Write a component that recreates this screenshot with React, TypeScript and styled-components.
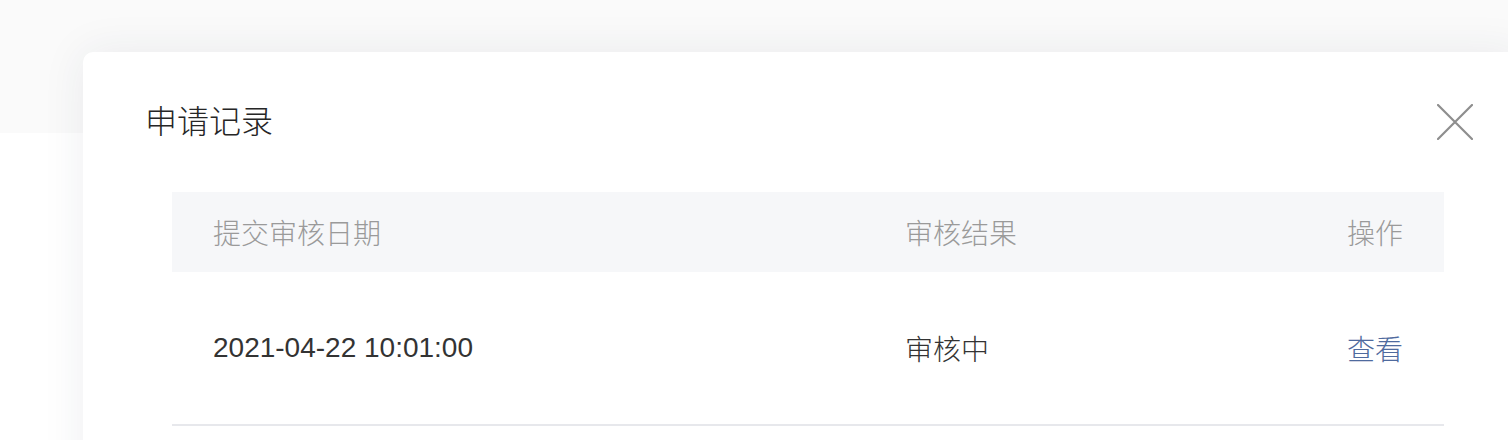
import React from "react";
import styled, { createGlobalStyle } from "styled-components";

const GlobalStyle = createGlobalStyle`
  html, body {
    margin: 0;
    padding: 0;
    background: #ffffff;
    overflow: hidden;
  }
  body {
    font-family: "Liberation Sans", "Noto Sans CJK SC", sans-serif;
  }
`

const Page = styled.div`
  position: relative;
  width: 1508px;
  height: 440px;
  overflow: hidden;
`

const TopBand = styled.div`
  height: 133px;
  background: #fafafa;
`

// dialog sits over the page, so it is placed absolutely
const Modal = styled.div`
  position: absolute;
  left: 83px;
  top: 52px;
  width: 1440px;
  height: 460px;
  background: #ffffff;
  border-radius: 10px;
  box-shadow: 0 0 44px rgba(40, 50, 80, 0.08);
  padding: 0 50px 0 62px;
  box-sizing: border-box;
`

const Header = styled.div`
  display: flex;
  align-items: center;
  justify-content: space-between;
  height: 140px;
`

const Title = styled.h2`
  margin: 0;
  font-size: 32px;
  font-weight: 300;
  color: #262626;
  line-height: 1;
`

const CloseButton = styled.button`
  display: flex;
  padding: 0;
  border: none;
  background: none;
  cursor: pointer;
`

const Table = styled.div`
  width: 1272px;
  margin-left: 27px;
`

const Row = styled.div<{ head?: boolean }>`
  display: grid;
  grid-template-columns: 692px 1fr auto;
  align-items: center;
  padding: 0 41px;
  height: ${p => (p.head ? "80px" : "152px")};
  background: ${p => (p.head ? "#f6f7f9" : "#ffffff")};
  border-bottom: ${p => (p.head ? "none" : "2px solid #e7e8ec")};
  font-size: 28px;
  font-weight: 300;
  color: ${p => (p.head ? "#9a9a9a" : "#333333")};
`

const Cell = styled.div<{ right?: boolean }>`
  text-align: ${p => (p.right ? "right" : "left")};
  white-space: nowrap;
`

const Link = styled.a`
  color: #4f6a9e;
  text-decoration: none;
  cursor: pointer;
`

type Record = {
    date: string;
    status: string;
}

const records: Record[] = [
    { date: "2021-04-22 10:01:00", status: "审核中" },
]

function CloseIcon() {
    return (
        <svg width="36" height="36" viewBox="0 0 36 36">
            <path d="M1 1 L35 35 M35 1 L1 35" stroke="#8e8e8e" strokeWidth="2.2"
                  strokeLinecap="round" fill="none"/>
        </svg>
    )
}

export default function App() {
    return (
        <Page>
            <GlobalStyle/>
            <TopBand/>
            <Modal>
                <Header>
                    <Title>申请记录</Title>
                    <CloseButton aria-label="关闭">
                        <CloseIcon/>
                    </CloseButton>
                </Header>
                <Table>
                    <Row head>
                        <Cell>提交审核日期</Cell>
                        <Cell>审核结果</Cell>
                        <Cell right>操作</Cell>
                    </Row>
                    {records.map(r =>
                        <Row key={r.date}>
                            <Cell>{r.date}</Cell>
                            <Cell>{r.status}</Cell>
                            <Cell right><Link>查看</Link></Cell>
                        </Row>
                    )}
                </Table>
            </Modal>
        </Page>
    )
}
